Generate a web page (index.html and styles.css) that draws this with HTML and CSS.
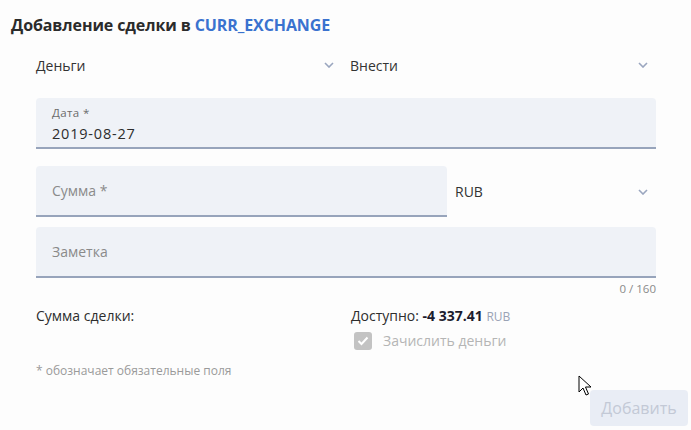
FILE: index.html
```html
<!DOCTYPE html>
<html lang="ru">
<head>
<meta charset="utf-8">
<link rel="stylesheet" href="styles.css">
</head>
<body>
<div class="dialog">
  <h1 class="title">Добавление сделки в <span class="accent">CURR_EXCHANGE</span></h1>
  <div class="form">
    <div class="row two selects">
      <div class="select"><span>Деньги</span><svg class="chev" width="10" height="6" viewBox="0 0 10 6"><path d="M1 1l4 4 4-4" fill="none" stroke="#9aa6bf" stroke-width="1.6"/></svg></div>
      <div class="select"><span>Внести</span><svg class="chev" width="10" height="6" viewBox="0 0 10 6"><path d="M1 1l4 4 4-4" fill="none" stroke="#9aa6bf" stroke-width="1.6"/></svg></div>
    </div>
    <div class="field filled">
      <div class="label">Дата *</div>
      <div class="value">2019-08-27</div>
    </div>
    <div class="row amount">
      <div class="field empty grow"><span class="placeholder">Сумма *</span></div>
      <div class="select currency"><span>RUB</span><svg class="chev" width="10" height="6" viewBox="0 0 10 6"><path d="M1 1l4 4 4-4" fill="none" stroke="#9aa6bf" stroke-width="1.6"/></svg></div>
    </div>
    <div class="field empty note"><span class="placeholder">Заметка</span></div>
    <div class="counter">0 / 160</div>
    <div class="row two summary">
      <div class="sum">Сумма сделки:</div>
      <div class="avail">
        <div>Доступно: <b>-4 337.41</b> <span class="cur">RUB</span></div>
        <label class="check"><span class="box"><svg width="12" height="10" viewBox="0 0 12 10"><path d="M1.5 5l3 3 6-6.5" fill="none" stroke="#fff" stroke-width="2"/></svg></span>Зачислить деньги</label>
      </div>
    </div>
    <div class="hint">* обозначает обязательные поля</div>
  </div>
  <div class="actions"><button class="btn">Добавить</button></div>
  <svg class="cursor" width="14" height="22" viewBox="0 0 14 22"><path d="M1 1v16l4-4 3 7 2.5-1-3-7h5.5z" fill="#fff" stroke="#000" stroke-width="1"/></svg>
</div>
</body>
</html>
```
FILE: styles.css
```css
* { box-sizing: border-box; }
html, body { margin: 0; background: #fdfdfd; }
body { font-family: "Open Sans", "Noto Sans", sans-serif; color: #333; font-size: 14px; }
.dialog { position: relative; width: 691px; height: 430px; padding: 13px 11px 0; }
.title { margin: 0; font-size: 16px; font-weight: 700; line-height: 24px; color: #2b2b2b; letter-spacing: -0.1px; }
.accent { color: #3a72cf; }
.form { padding: 0 24px 0 25px; }
.row { display: flex; }
.two { gap: 10px; }
.two > * { flex: 1; }
.select { display: flex; align-items: center; justify-content: space-between; height: 42px; padding-right: 8px; color: #333; font-size: 14px; }
.selects { margin-top: 7px; margin-bottom: 12px; }
.selects .select:first-child { padding-right: 6px; }
.chev { display: block; }
.field { background: #eff2f7; border-radius: 4px 4px 0 0; border-bottom: 2px solid #97a4bb; height: 51px; }
.filled { padding: 7px 16px 0; }
.label { font-size: 11.5px; color: #6b6b6b; line-height: 15px; letter-spacing: 0.4px; }
.value { font-size: 14.5px; color: #2d2d2d; line-height: 20px; margin-top: 4px; letter-spacing: 0.8px; }
.empty { display: flex; align-items: center; padding-left: 16px; }
.placeholder { color: #8a8a8a; font-size: 14px; }
.amount { margin-top: 17px; gap: 8px; }
.grow { flex: 0 0 411px; }
.currency { flex: 1; height: 51px; padding-left: 0; padding-right: 8px; }
.note { margin-top: 10px; }
.counter { text-align: right; font-size: 11.5px; color: #8a8a8a; line-height: 15px; margin-top: 3px; }
.summary { margin-top: 10px; }
.sum, .avail { font-size: 14px; color: #2d2d2d; line-height: 19px; }
.avail b { color: #1c1c2e; font-weight: 700; }
.cur { color: #9aa3b5; font-size: 12px; }
.check { display: flex; align-items: center; gap: 11px; color: #b5b5b5; margin-top: 5px; padding-left: 3px; font-size: 14px; }
.box { width: 18px; height: 18px; border-radius: 3px; background: #c3c3c3; display: flex; align-items: center; justify-content: center; }
.hint { font-size: 12px; color: #9a9a9a; margin-top: 12px; }
.actions { display: flex; justify-content: flex-end; margin-top: 11px; margin-right: -8px; }
.btn { width: 98px; height: 36px; border: 0; border-radius: 4px; background: #e9edf5; color: #c3c9d6; font-family: inherit; font-size: 16px; padding: 0; }
.cursor { position: absolute; left: 578px; top: 375px; }
```
